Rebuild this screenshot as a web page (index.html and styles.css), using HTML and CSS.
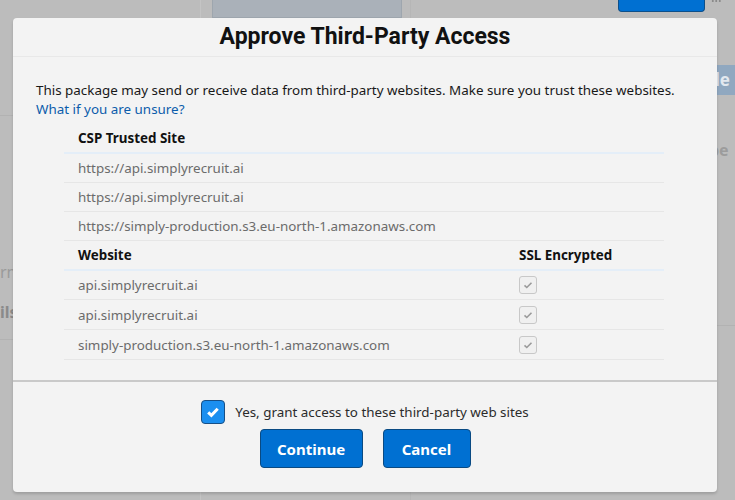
FILE: index.html
```html
<!DOCTYPE html>
<html lang="en">

<head>
  <meta charset="UTF-8">
  <meta name="viewport" content="width=device-width, initial-scale=1.0">
  <title>Approve Third-Party Access</title>
  <link rel="stylesheet" href="styles.css">
</head>

<body>
  <div class="page">
    <div class="page-left">
      <div class="page-line"></div>
      <div class="ghost ghost-rn">rn</div>
      <div class="ghost ghost-ils">ils</div>
      <div class="page-line"></div>
    </div>
    <div class="page-mid">
      <div class="mid-panel"></div>
    </div>
    <div class="page-right">
      <div class="top-actions">
        <span class="top-btn"></span>
        <span class="top-dots"></span>
      </div>
      <div class="side-tab">de</div>
      <div class="ghost ghost-be">be</div>
      <div class="page-line low"></div>
    </div>
  </div>

  <div class="modal">
    <header class="modal-header">
      <h2>Approve Third-Party Access</h2>
    </header>

    <div class="modal-body">
      <p class="intro">This package may send or receive data from third-party websites. Make sure you trust these websites.
        <br><a href="#" class="help-link">What if you are unsure?</a></p>

      <table class="sites">
        <thead>
          <tr><th>CSP Trusted Site</th></tr>
        </thead>
        <tbody>
          <tr><td>https://api.simplyrecruit.ai</td></tr>
          <tr><td>https://api.simplyrecruit.ai</td></tr>
          <tr><td>https://simply-production.s3.eu-north-1.amazonaws.com</td></tr>
        </tbody>
      </table>

      <table class="sites websites">
        <thead>
          <tr><th>Website</th><th class="ssl-col">SSL Encrypted</th></tr>
        </thead>
        <tbody>
          <tr><td>api.simplyrecruit.ai</td><td class="ssl-col"><span class="ssl-box"><svg viewBox="0 0 12 12"><path d="M2.5 6.3l2.3 2.2 4.7-4.8" /></svg></span></td></tr>
          <tr><td>api.simplyrecruit.ai</td><td class="ssl-col"><span class="ssl-box"><svg viewBox="0 0 12 12"><path d="M2.5 6.3l2.3 2.2 4.7-4.8" /></svg></span></td></tr>
          <tr><td>simply-production.s3.eu-north-1.amazonaws.com</td><td class="ssl-col"><span class="ssl-box"><svg viewBox="0 0 12 12"><path d="M2.5 6.3l2.3 2.2 4.7-4.8" /></svg></span></td></tr>
        </tbody>
      </table>
    </div>

    <footer class="modal-footer">
      <label class="grant">
        <span class="grant-box"><svg viewBox="0 0 16 16"><path d="M3.2 8.3l3.2 3.1 6.3-6.6" /></svg></span>
        Yes, grant access to these third-party web sites
      </label>
      <div class="actions">
        <button class="btn btn-continue">Continue</button>
        <button class="btn btn-cancel">Cancel</button>
      </div>
    </footer>
  </div>
</body>

</html>
```

FILE: styles.css
```css
*,
*::before,
*::after {
  box-sizing: border-box;
}

html,
body {
  margin: 0;
  height: 100%;
}

body {
  font-family: "Noto Sans", "Open Sans", Arial, sans-serif;
  font-size: 13.4px;
  color: #181818;
  background: #bcbcbc;
  overflow: hidden;
}

/* page behind the dialog */

.page {
  display: flex;
  height: 100%;
}

.page-left {
  width: 201px;
  padding-top: 115px;
  border-right: 1px solid #c4c4c4;
}

.page-line {
  height: 1px;
  background: #b2b2b2;
}

.ghost {
  color: #9a9a9a;
  font-size: 16px;
}

.ghost-rn {
  margin-top: 145px;
}

.ghost-ils {
  font-weight: 700;
  color: #8a8a8a;
  margin: 18px 0 16px;
}

.page-mid {
  width: 210px;
  padding: 0 8px 0 11px;
  border-right: 1px solid #b6b6b6;
}

.mid-panel {
  height: 18px;
  background: #aab1b9;
  border: 1px solid #9ea6ae;
  border-top: 0;
}

.page-right {
  flex: 1;
}

.top-actions {
  display: flex;
  align-items: flex-start;
  padding-left: 207px;
  height: 65px;
}

.top-btn {
  width: 87px;
  height: 12px;
  background: #0070d2;
  border: 1px solid #0d4f8a;
  border-top: 0;
  border-radius: 0 0 4px 4px;
}

.top-dots {
  width: 10px;
  height: 2px;
  margin-left: 6px;
  background: radial-gradient(circle, #8a8a8a 0.8px, transparent 1px) 0 0 / 3.5px 2px repeat-x;
}

.side-tab {
  margin-left: 298px;
  height: 30px;
  background: #90a8c0;
  color: #e2e8ef;
  font-weight: 700;
  font-size: 17px;
  line-height: 30px;
}

.ghost-be {
  margin: 44px 0 0 298px;
  font-weight: 700;
  color: #9c9c9c;
}

.page-line.low {
  margin-top: 164px;
}

/* dialog */

.modal {
  position: absolute;
  top: 18px;
  left: 13px;
  width: 704px;
  height: 474px;
  display: flex;
  flex-direction: column;
  background: #f3f3f3;
  border-radius: 4px;
  box-shadow: 0 2px 3px rgba(0, 0, 0, 0.16);
}

.modal-header {
  height: 39px;
  border-bottom: 1px solid #e8e8e8;
  text-align: center;
}

.modal-header h2 {
  margin: 0;
  font-family: Roboto, "Liberation Sans", Arial, sans-serif;
  font-size: 23px;
  font-weight: 700;
  line-height: 38px;
  color: #111;
}

.modal-body {
  flex: 1;
  padding: 24px 23px 0 23px;
}

.intro {
  margin: 0 0 4px;
  line-height: 19px;
}

.help-link {
  color: #0b5cab;
  text-decoration: none;
}

.sites {
  width: 600px;
  margin-left: 28px;
  border-collapse: collapse;
}

.sites th {
  text-align: left;
  font-weight: 700;
  color: #111;
  height: 30px;
  padding: 0 14px;
  border-bottom: 2px solid #e4eef8;
}

.sites td {
  height: 29px;
  padding: 0 14px;
  color: #6b6b6b;
  border-bottom: 1px solid #e6e6e6;
}

.websites th {
  height: 29px;
}

.websites td {
  height: 30px;
}

.ssl-col {
  width: 159px;
}

.ssl-box {
  display: inline-flex;
  vertical-align: middle;
  width: 18px;
  height: 18px;
  border: 1px solid #c8c8c8;
  border-radius: 3px;
  background: #f0f0f0;
  padding: 2px;
}

.ssl-box svg {
  width: 100%;
  height: 100%;
  fill: none;
  stroke: #9a9a9a;
  stroke-width: 1.6;
}

.modal-footer {
  height: 112px;
  border-top: 2px solid #c9c9c9;
  display: flex;
  flex-direction: column;
  align-items: center;
  padding-top: 18px;
}

.grant {
  display: flex;
  align-items: center;
  gap: 10px;
  color: #2b2b2b;
}

.grant-box {
  width: 24px;
  height: 24px;
  border: 1px solid #174f86;
  border-radius: 4px;
  background: #1b8ff0;
  padding: 3px;
}

.grant-box svg {
  display: block;
  width: 100%;
  height: 100%;
  fill: none;
  stroke: #fff;
  stroke-width: 3;
}

.actions {
  display: flex;
  gap: 20px;
  margin-top: 5px;
}

.btn {
  height: 39px;
  padding: 0;
  font-family: inherit;
  font-size: 15px;
  font-weight: 700;
  color: #fff;
  background: #0070d2;
  border: 1px solid #0a4a82;
  border-radius: 4px;
}

.btn-continue {
  width: 103px;
}

.btn-cancel {
  width: 88px;
}
```
